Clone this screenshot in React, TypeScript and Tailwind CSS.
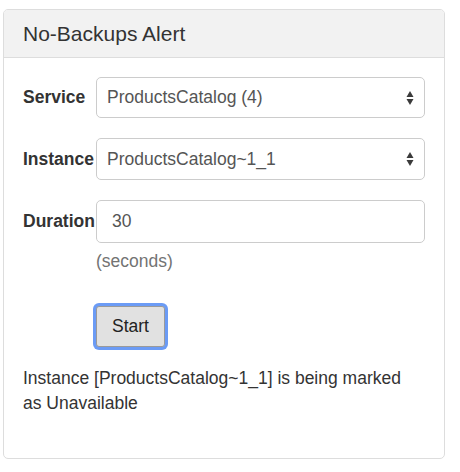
import React, { useState } from 'react';

const SelectArrows = () => (
  <svg width="8" height="16" viewBox="0 0 8 16" className="shrink-0">
    <path d="M4 1 L7.5 7 L0.5 7 Z" fill="#3a3a3a" />
    <path d="M4 15 L7.5 9 L0.5 9 Z" fill="#3a3a3a" />
  </svg>
);

const FakeSelect = ({ value, h }: { value: string; h: string }) => (
  <div className={`${h} w-full border border-[#ccc] rounded-[5px] bg-white flex items-center justify-between pl-[10px] pr-[10px] text-[#555]`}>
    <span>{value}</span>
    <SelectArrows />
  </div>
);

export default function App() {
  const [duration, setDuration] = useState('30');

  return (
    <div
      className="w-[460px] h-[472px] bg-white pl-[3px] pt-[9px] text-[17.5px] leading-[25px] text-[#333]"
      style={{ fontFamily: '"Liberation Sans", Arial, Helvetica, sans-serif' }}
    >
      <div className="w-[442px] h-[450px] border border-[#ddd] rounded-[5px] flex flex-col overflow-hidden">
        <div className="h-[48px] shrink-0 bg-[#f2f2f2] border-b border-[#ddd] px-[19px] flex items-center text-[21px] text-[#333]">
          No-Backups Alert
        </div>

        <div className="px-[19px] pt-[19px]">
          <div className="grid grid-cols-[73px_329px] gap-y-[20px] items-center">
            <label className="font-bold">Service</label>
            <FakeSelect value="ProductsCatalog (4)" h="h-[41px]" />

            <label className="font-bold">Instance</label>
            <FakeSelect value="ProductsCatalog~1_1" h="h-[42px]" />

            <label className="font-bold">Duration</label>
            <input
              type="text"
              value={duration}
              onChange={(e) => setDuration(e.target.value)}
              className="h-[43px] w-full border border-[#ccc] rounded-[5px] bg-white pl-[15px] text-[#555] outline-none"
            />
          </div>

          <div className="ml-[73px] mt-[6px] text-[#737373]">(seconds)</div>

          <div className="ml-[73px] mt-[32px]">
            <button className="w-[69px] h-[41px] border border-[#9a9a9a] rounded-[3px] bg-[#e1e1e1] text-[#222] shadow-[0_0_0_3px_#6b9bf5]">
              Start
            </button>
          </div>

          <p className="mt-[19px] max-w-[390px]">
            Instance [ProductsCatalog~1_1] is being marked as Unavailable
          </p>
        </div>
      </div>
    </div>
  );
}
